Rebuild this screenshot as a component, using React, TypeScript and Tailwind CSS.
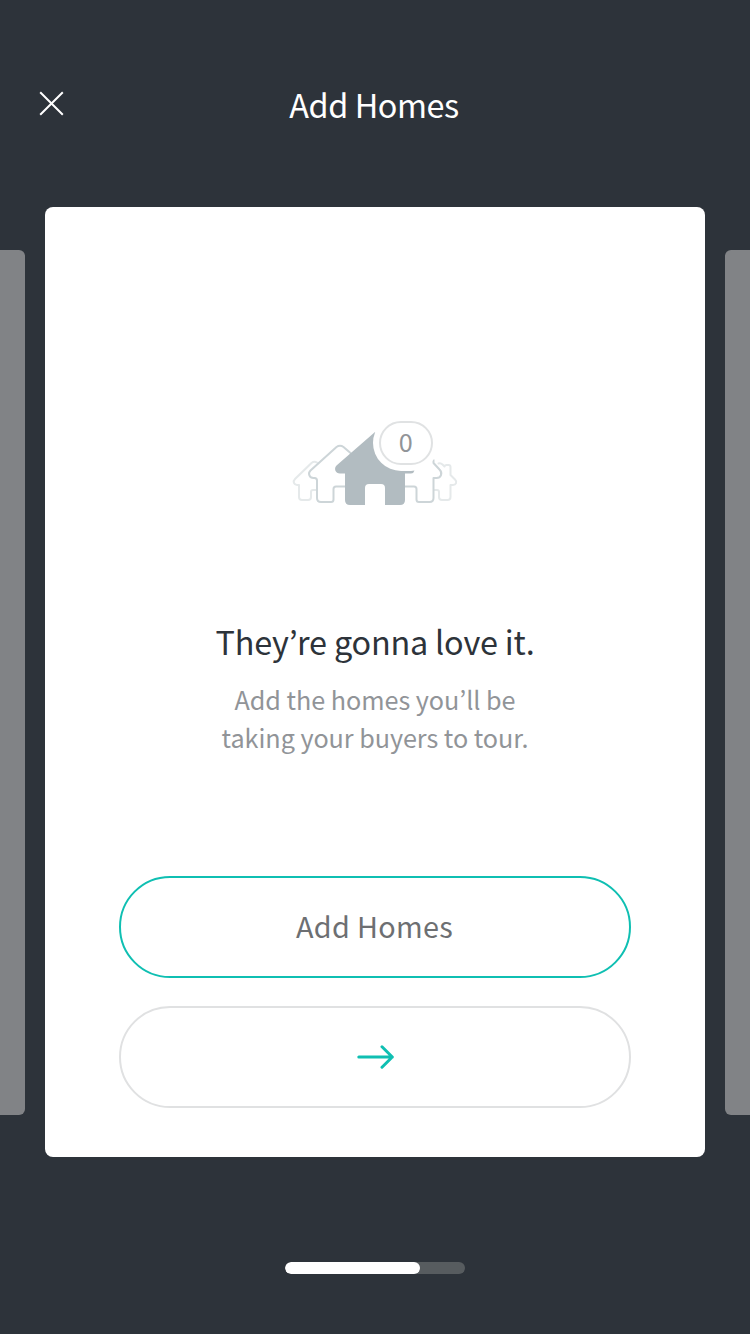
function Houses() {
  return (
    <svg width="180" height="96" viewBox="285 415 180 96" fill="none" strokeLinecap="round" strokeLinejoin="round" role="img" aria-label="0 homes">
      <g stroke="#e5e9ea" strokeWidth="2">
        <path d="M317 462.5C315 461.3 313 461.8 311.5 463L295 479C292.500 481.500 294 485 297 485H299V497Q299 500 302 500H308Q311 500 311 497V492Q311 490 313 490H316" />
        <path d="M438.500 463.500Q440.500 462.500 442.500 464.500L444.500 466.500Q445 465 446.500 465H448.500Q450.500 465 450.500 467V475L455 479.500C457.500 482 456 485 453 485H450.500V497Q450.500 500 447.500 500H442Q439 500 439 497V492Q439 490 437 490H434.500" />
      </g>
      <g stroke="#cdd5d8" strokeWidth="2">
        <path d="M350.500 453L343.500 447Q340 444.500 336.500 447L310.500 470.500C307.500 473.500 309.500 478 313.500 478H314.500Q317 478 317 480.500V498Q317 502 321 502H331Q333.500 502 333.500 499.500V489Q333.500 486.500 336 486.500H345" />
        <path d="M433.500 460V463L439.500 469.500C443 473 441 478 436.500 478H433.500V498Q433.500 502 429.500 502H419Q416.500 502 416.500 499.500V489Q416.500 486.500 414 486.500H405" />
      </g>
      <path fill="#b2bcc1" d="M375 432L336.500 465.500C333.500 468.500 335.500 473.500 340 473.500H345V500Q345 505 350 505H365V488Q365 484 369 484H381Q385 484 385 488V505H400Q405 505 405 500V473.500H411Q414 473 414.500 470.500L385 440Z" />
      <rect x="373" y="415" width="66" height="56" rx="28" fill="#fff" />
      <rect x="380" y="422" width="52" height="42" rx="21" fill="#fff" stroke="#e0e2e3" strokeWidth="2" />
      <text x="405.700" y="452" textAnchor="middle" fontSize="25.200" fill="#919498">0</text>
    </svg>
  );
}

export default function App() {
  return (
    <main className="flex h-[1334px] w-[750px] flex-col overflow-hidden bg-[#2d333a] font-['Noto_Sans_CJK_KR','Noto_Sans',sans-serif]">
      <header className="grid h-[207px] grid-cols-[103px_1fr_105px] pt-[76px]">
        <button aria-label="Close" className="h-[54px] pl-[39px]">
          <svg width="25" height="25" viewBox="0 0 25 25" stroke="#fff" strokeWidth="2" fill="none">
            <path d="M1.200 1.200L23.800 23.800M23.800 1.200L1.200 23.800" />
          </svg>
        </button>
        <h1 className="h-[56px] text-center text-[32.4px] leading-[56px] tracking-[-0.45px] text-white">Add Homes</h1>
      </header>
      <div className="flex h-[950px] items-start justify-between">
        <div className="mt-[43px] h-[865px] w-[25px] rounded-r-[6px] bg-[#818386]" />
        <section className="flex h-[950px] w-[660px] flex-col items-center rounded-[8px] bg-white pt-[208px]">
          <Houses />
          <h2 className="mt-[102px] h-[56px] text-[32.4px] leading-[56px] tracking-[-0.2px] whitespace-nowrap text-[#2d333a]">They’re gonna love it.</h2>
          <p className="mt-[11px] h-[76px] text-center text-[25.2px] leading-[38px] tracking-[-0.04px] whitespace-nowrap text-[#919498]">
            Add the homes you’ll be
            <br />
            taking your buyers to tour.
          </p>
          <button className="mt-[120px] h-[102px] w-[512px] rounded-full border-2 border-[#0fbfb2] pr-[1px] pb-[2px] text-[28.8px] leading-[50px] tracking-[0.3px] text-[#6d6f72]">Add Homes</button>
          <button aria-label="Next" className="mt-[28px] flex h-[102px] w-[512px] items-center justify-center rounded-full border-2 border-[#e0e1e2]">
            <svg width="38" height="26" viewBox="0 0 38 26" fill="none" stroke="#0fbfb2" strokeWidth="3" strokeLinecap="round" strokeLinejoin="round">
              <path d="M2.800 13H36.300M26 2.800L36.300 13L26 23.200" />
            </svg>
          </button>
        </section>
        <div className="mt-[43px] h-[865px] w-[25px] rounded-l-[6px] bg-[#818386]" />
      </div>
      <div className="mx-auto mt-[105px] h-[12px] w-[180px] overflow-hidden rounded-full bg-[#575c5f]">
        <div className="h-full w-[135px] rounded-full bg-white" />
      </div>
    </main>
  );
}
